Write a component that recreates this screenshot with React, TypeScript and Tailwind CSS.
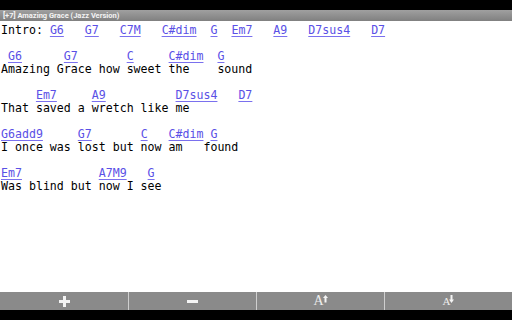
import React from "react";

type Seg = { t: string; c?: boolean };

const C = (t: string): Seg => ({ t, c: true });
const T = (t: string): Seg => ({ t });

const rows: Seg[][] = [
  [T("Intro: "), C("G6"), T("   "), C("G7"), T("   "), C("C7M"), T("   "), C("C#dim"), T("  "), C("G"), T("  "), C("Em7"), T("   "), C("A9"), T("   "), C("D7sus4"), T("   "), C("D7")],
  [T(" ")],
  [T(" "), C("G6"), T("      "), C("G7"), T("       "), C("C"), T("     "), C("C#dim"), T("  "), C("G")],
  [T("Amazing Grace how sweet the    sound")],
  [T(" ")],
  [T("     "), C("Em7"), T("     "), C("A9"), T("          "), C("D7sus4"), T("   "), C("D7")],
  [T("That saved a wretch like me")],
  [T(" ")],
  [C("G6add9"), T("     "), C("G7"), T("       "), C("C"), T("   "), C("C#dim"), T(" "), C("G")],
  [T("I once was lost but now am   found")],
  [T(" ")],
  [C("Em7"), T("           "), C("A7M9"), T("   "), C("G")],
  [T("Was blind but now I see")],
];

export default function App() {
  return (
    <div className="w-[512px] h-[320px] flex flex-col bg-white overflow-hidden">
      <div className="h-[10px] bg-black shrink-0" />
      <div
        className="h-[11px] shrink-0 bg-gradient-to-b from-[#a0a0a0] to-[#808080] flex items-center pl-[3px] text-[7.5px] font-bold text-[#f4f4f4] leading-none"
        style={{ fontFamily: "Roboto, 'Open Sans', sans-serif" }}
      >
        [+7] Amazing Grace (Jazz Version)
      </div>
      <div
        className="flex-1 pt-[3px] pl-[1px] text-[11.6px] leading-[13px] text-black whitespace-pre"
        style={{ fontFamily: "'DejaVu Sans Mono', monospace" }}
      >
        {rows.map((r, i) => (
          <div key={i}>
            {r.map((s, j) =>
              s.c ? (
                <span key={j} className="text-[#5a50e6] underline decoration-[#7a70ee] underline-offset-[2px]">
                  {s.t}
                </span>
              ) : (
                <span key={j}>{s.t}</span>
              )
            )}
          </div>
        ))}
      </div>
      <div className="h-[18px] shrink-0 flex bg-[#8a8a8a] pl-[1px]">
        <div className="flex-1 flex items-center justify-center border-r border-[#cfcfcf]">
          <svg width="11" height="11" viewBox="0 0 11 11">
            <rect x="4" y="0" width="3" height="11" fill="#f4f4f4" />
            <rect x="0" y="4" width="11" height="3" fill="#f4f4f4" />
          </svg>
        </div>
        <div className="flex-1 flex items-center justify-center border-r border-[#cfcfcf]">
          <svg width="11" height="11" viewBox="0 0 11 11">
            <rect x="0" y="4" width="11" height="3" fill="#f4f4f4" />
          </svg>
        </div>
        <div className="flex-1 flex items-center justify-center border-r border-[#cfcfcf]">
          <div className="flex items-end">
            <span className="text-[14px] leading-none text-[#ededed]" style={{ fontFamily: "'Liberation Serif', serif" }}>A</span>
            <svg width="5" height="8" viewBox="0 0 5 8" className="mb-[5px] -ml-[1px]">
              <polygon points="2.5,0 5,3 0,3" fill="#f4f4f4" />
              <rect x="1.5" y="2.5" width="2" height="5" fill="#f4f4f4" />
            </svg>
          </div>
        </div>
        <div className="flex-1 flex items-center justify-center">
          <div className="flex items-end">
            <span className="text-[11px] leading-none text-[#ededed]" style={{ fontFamily: "'Liberation Serif', serif" }}>A</span>
            <svg width="5" height="8" viewBox="0 0 5 8" className="mb-[4px] -ml-[1px]">
              <rect x="1.5" y="0" width="2" height="5" fill="#f4f4f4" />
              <polygon points="0,4.5 5,4.5 2.5,8" fill="#f4f4f4" />
            </svg>
          </div>
        </div>
      </div>
      <div className="h-[10px] bg-black shrink-0" />
    </div>
  );
}
